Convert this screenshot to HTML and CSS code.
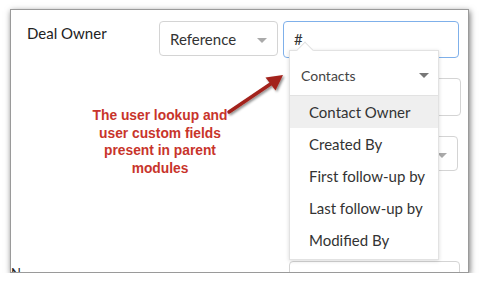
FILE: index.html
```html
<!DOCTYPE html>
<html lang="en">
<head>
    <meta charset="UTF-8">
    <title>Deal Owner lookup</title>
    <link rel="stylesheet" href="styles.css">
</head>
<body>
    <div class="frame">
        <div class="form">
            <div class="row">
                <div class="label">Deal Owner</div>
                <div class="select ref">Reference <span class="caret"></span></div>
                <div class="input active">#</div>
            </div>
            <div class="row sub">
                <div class="input tall"></div>
            </div>
            <div class="row sub">
                <div class="select wide"><span class="caret"></span></div>
            </div>
            <div class="row last">
                <div class="label cut">N</div>
                <div class="input tall"></div>
            </div>
        </div>

        <div class="note">
            The user lookup and<br>
            user custom fields<br>
            present in parent<br>
            modules
        </div>

        <svg class="pointer" width="80" height="60" viewBox="0 0 80 60">
            <defs>
                <filter id="sh" x="-30%" y="-30%" width="160%" height="160%">
                    <feDropShadow dx="1.5" dy="1.5" stdDeviation="1.2" flood-color="#000" flood-opacity="0.45"/>
                </filter>
            </defs>
            <g filter="url(#sh)">
                <line x1="9" y1="47" x2="52" y2="18" stroke="#a3231c" stroke-width="3.5" stroke-linecap="round"/>
                <polygon points="63,10 55.5,25.5 45.5,12.5" fill="#a3231c"/>
            </g>
        </svg>

        <div class="menu">
            <div class="menu-head">Contacts <span class="caret"></span></div>
            <ul class="menu-list">
                <li class="selected">Contact Owner</li>
                <li>Created By</li>
                <li>First follow-up by</li>
                <li>Last follow-up by</li>
                <li>Modified By</li>
            </ul>
        </div>
    </div>
</body>
</html>
```
FILE: styles.css
```css
body {
    margin: 0;
    background: #fff;
    font-family: 'Lato', 'Liberation Sans', sans-serif;
    color: #333;
}

.frame {
    position: relative;
    box-sizing: border-box;
    width: 459px;
    height: 264px;
    margin: 9px 0 0 10px;
    background: #fff;
    border: 1px solid #9a9a9a;
    box-shadow: 1px 2px 6px rgba(0, 0, 0, 0.55);
    overflow: hidden;
}

.form {
    padding: 11px 0 0 16px;
}

.row {
    display: flex;
    align-items: flex-start;
    gap: 5px;
}

.row.sub {
    margin-top: 20px;
    padding-left: 263px;
}

.row.last {
    margin: 90px 0 0 -16px;
}

.label {
    width: 127px;
    padding-top: 3px;
    font-size: 15px;
    color: #222;
}

.label.cut {
    width: 273px;
    padding-top: 4px;
    font-size: 13px;
}

.select,
.input {
    box-sizing: border-box;
    position: relative;
    border: 1px solid #d4d4d4;
    border-radius: 4px;
    background: #fff;
    font-size: 15px;
}

.select.ref {
    width: 119px;
    height: 35px;
    padding: 8px 0 0 10px;
}

.select .caret {
    position: absolute;
    right: 10px;
    top: 16px;
}

.caret {
    width: 0;
    height: 0;
    border-left: 5px solid transparent;
    border-right: 5px solid transparent;
    border-top: 5px solid #aaa;
}

.input {
    width: 176px;
    height: 37px;
}

.input.active {
    border-color: #7fb0ea;
    padding: 8px 0 0 10px;
}

.input.tall {
    width: 171px;
    height: 38px;
}

.select.wide {
    width: 168px;
    height: 35px;
}

.note {
    position: absolute;
    left: 64px;
    top: 97px;
    width: 170px;
    text-align: center;
    font-family: 'Liberation Sans', Arial, sans-serif;
    font-weight: bold;
    font-size: 13.8px;
    line-height: 17.7px;
    color: #c8342b;
}

.pointer {
    position: absolute;
    left: 209px;
    top: 55px;
}

.menu {
    position: absolute;
    left: 278px;
    top: 40px;
    width: 150px;
    height: 210px;
    background: #fff;
    border: 1px solid #e2e2e2;
    box-sizing: border-box;
    box-shadow: 0 1px 4px rgba(0, 0, 0, 0.15);
}

.menu::before {
    content: '';
    position: absolute;
    left: 9px;
    top: -7px;
    width: 11px;
    height: 11px;
    background: #fff;
    border-left: 1px solid #e2e2e2;
    border-top: 1px solid #e2e2e2;
    transform: rotate(45deg);
}

.menu-head {
    position: relative;
    height: 45px;
    padding: 16px 0 0 11px;
    box-sizing: border-box;
    font-size: 14px;
    color: #444;
    border-bottom: 1px solid #e2e2e2;
}

.menu-head .caret {
    position: absolute;
    right: 9px;
    top: 22px;
    border-top-color: #777;
}

.menu-list {
    list-style: none;
    margin: 0;
    padding: 0;
}

.menu-list li {
    height: 32px;
    line-height: 33px;
    padding-left: 19px;
    font-size: 15px;
    color: #333;
}

.menu-list li.selected {
    background: #efefef;
}
```
